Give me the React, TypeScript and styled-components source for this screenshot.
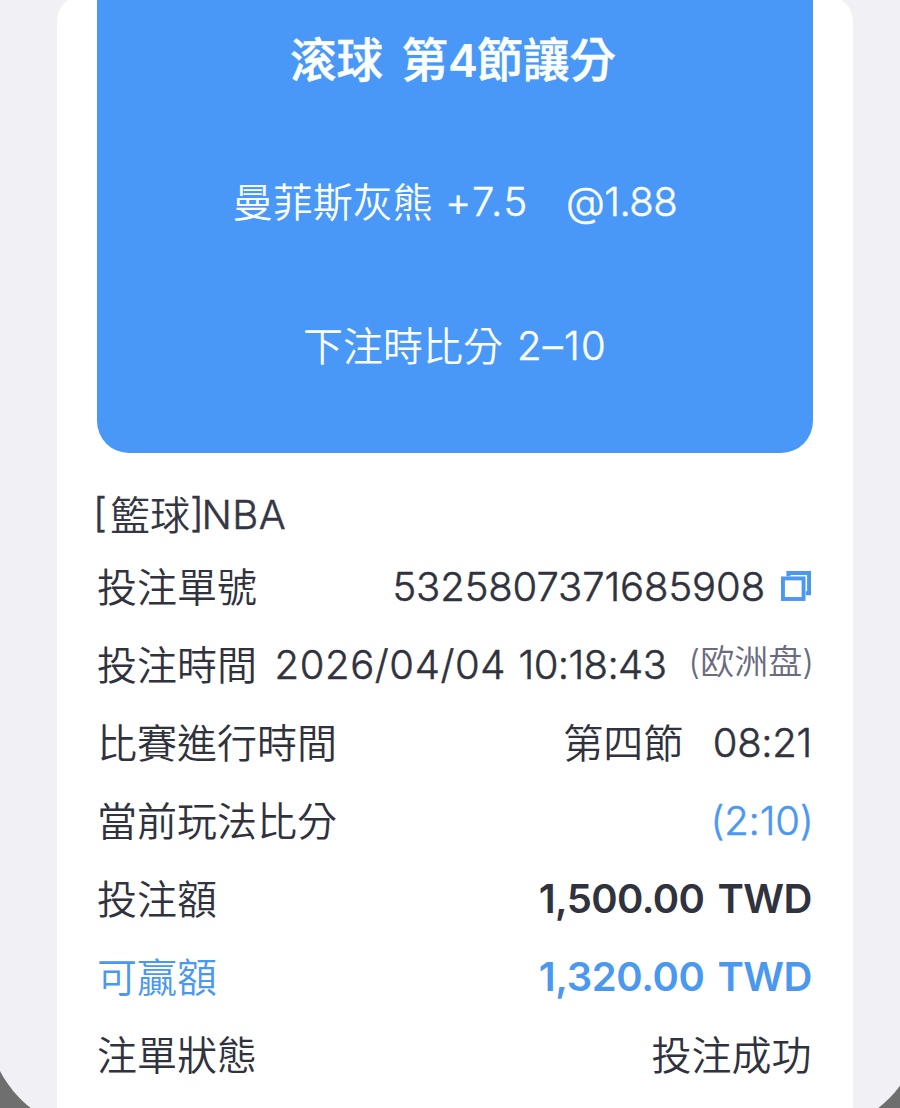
import React from 'react';
import styled, { createGlobalStyle } from 'styled-components';

const GlobalStyle = createGlobalStyle`
  * { box-sizing: border-box; }
  body {
    margin: 0;
    font-family: Inter, "Noto Sans CJK TC", sans-serif;
    font-weight: 350;
  }
`;

const blue = '#4998f8';
const linkBlue = '#4b98ef';

const Screen = styled.div`
  height: 1108px;
  overflow: hidden;
  background: #6f6f6f;
`;

const Sheet = styled.div`
  height: 1131px;
  margin: 0 -21px 0 -12px;
  padding: 0 68px 0 69px;
  border-radius: 0 0 110px 110px;
  background: #f0f0f5;
  overflow: hidden;
`;

const Card = styled.main`
  height: 1137px;
  margin-top: -4px;
  padding: 4px 40px 0;
  border-radius: 25px 25px 0 0;
  background: #fff;
`;

const Hero = styled.section`
  display: flex;
  flex-direction: column;
  align-items: center;
  height: 453px;
  padding-top: 28px;
  border-radius: 0 0 32px 32px;
  background: ${blue};
  color: #fafeff;
`;

const Title = styled.h1`
  margin: 0;
  padding-right: 4px;
  font-size: 46.5px;
  font-weight: 500;
  line-height: 64px;
  word-spacing: 6px;
  white-space: nowrap;
  -webkit-text-stroke: 0.5px currentColor;
`;

const TitleNumber = styled.span`
  font-size: 45px;
  font-weight: 600;
  line-height: 1;
  letter-spacing: -1.5px;
  -webkit-text-stroke: 0;
`;

const HeroLine = styled.div<{ $top: number }>`
  display: flex;
  height: 60px;
  margin-top: ${p => p.$top}px;
  font-size: 40px;
  line-height: 60px;
  white-space: nowrap;
`;

const Han = styled.span`
  padding-top: 1px;
`;

const Latin = styled.span<{ $spacing?: number; $before?: number }>`
  letter-spacing: ${p => p.$spacing ?? 0}px;
  margin-left: ${p => p.$before ?? 0}px;
  -webkit-text-stroke: 0.5px currentColor;
`;

const League = styled.div`
  display: flex;
  height: 66px;
  margin: 28.5px 0 0 -4px;
  font-size: 40px;
  line-height: 66px;
  color: #343643;
  white-space: nowrap;
`;

const Bracket = styled.span<{ $spacing: number }>`
  line-height: 62px;
  letter-spacing: ${p => p.$spacing}px;
  -webkit-text-stroke: 0.5px currentColor;
`;

const Row = styled.div<{ $accent?: boolean }>`
  display: flex;
  justify-content: space-between;
  height: 78px;
  font-size: 40px;
  line-height: 78px;
  color: ${p => (p.$accent ? linkBlue : '#30323e')};
  white-space: nowrap;
`;

const Value = styled.div<{ $blue?: boolean; $end?: number }>`
  display: flex;
  margin-right: ${p => p.$end ?? 1}px;
  ${p => p.$blue && `color: ${linkBlue};`}
`;

const Amount = styled.span<{ $spacing: number; $before?: number }>`
  margin-left: ${p => p.$before ?? 0}px;
  font-weight: 600;
  letter-spacing: ${p => p.$spacing}px;
`;

const Market = styled.span`
  margin-left: 22px;
  font-family: Inter, "Noto Sans CJK SC", sans-serif;
  font-size: 34px;
  line-height: 72px;
  color: #6a6b80;
`;

const CopyButton = styled.button`
  display: flex;
  align-items: center;
  height: 77px;
  margin-left: 16px;
  padding: 0;
  border: 0;
  background: none;
  color: ${linkBlue};
`;

const CopyIcon = () => (
  <svg width="30" height="30" viewBox="0 0 30 30" fill="none" stroke="currentColor" strokeWidth="3.9">
    <path d="M7.4 5.2V1.95H28.05V22.2H25" />
    <rect x="1.95" y="7.4" width="20.6" height="20.6" />
  </svg>
);

export default function App() {
  return (
    <Screen>
      <GlobalStyle />
      <Sheet>
        <Card>
          <Hero>
            <Title>滚球 第<TitleNumber>4</TitleNumber>節讓分</Title>
            <HeroLine $top={80}>
              <Han>曼菲斯灰熊</Han>
              <Latin $before={12.3} $spacing={1.7}>+7.5</Latin>
              <Latin $before={37} $spacing={-0.5}>@1.88</Latin>
            </HeroLine>
            <HeroLine $top={84}>
              <Han>下注時比分</Han>
              <Latin $before={14} $spacing={1.2}>2–10</Latin>
            </HeroLine>
          </Hero>
          <League>
            <Bracket $spacing={3}>[</Bracket>
            <Han>籃球</Han>
            <Bracket $spacing={-2.5}>]</Bracket>
            <Latin $spacing={0.5}>NBA</Latin>
          </League>
          <Row>
            <Han>投注單號</Han>
            <Value $end={2}>
              <Latin $spacing={-0.1}>5325807371685908</Latin>
              <CopyButton aria-label="複製"><CopyIcon /></CopyButton>
            </Value>
          </Row>
          <Row>
            <Han>投注時間</Han>
            <Value $end={-1}>
              <Latin $spacing={0.6}>2026/04/04</Latin>
              <Latin $before={12.5} $spacing={-0.6}>10:18:43</Latin>
              <Market>(欧洲盘)</Market>
            </Value>
          </Row>
          <Row>
            <Han>比賽進行時間</Han>
            <Value>
              <Han>第四節</Han>
              <Latin $before={29.5} $spacing={-0.3}>08:21</Latin>
            </Value>
          </Row>
          <Row>
            <Han>當前玩法比分</Han>
            <Value $blue $end={-0.5}>
              <Latin $spacing={-0.2}>(2:10)</Latin>
            </Value>
          </Row>
          <Row>
            <Han>投注額</Han>
            <Value>
              <Amount $spacing={-0.6}>1,500.00</Amount>
              <Amount $before={13} $spacing={-0.5}>TWD</Amount>
            </Value>
          </Row>
          <Row $accent>
            <Han>可贏額</Han>
            <Value>
              <Amount $spacing={-0.4}>1,320.00</Amount>
              <Amount $before={13} $spacing={-0.5}>TWD</Amount>
            </Value>
          </Row>
          <Row>
            <Han>注單狀態</Han>
            <Value $end={1.5}>
              <Han>投注成功</Han>
            </Value>
          </Row>
        </Card>
      </Sheet>
    </Screen>
  );
}
